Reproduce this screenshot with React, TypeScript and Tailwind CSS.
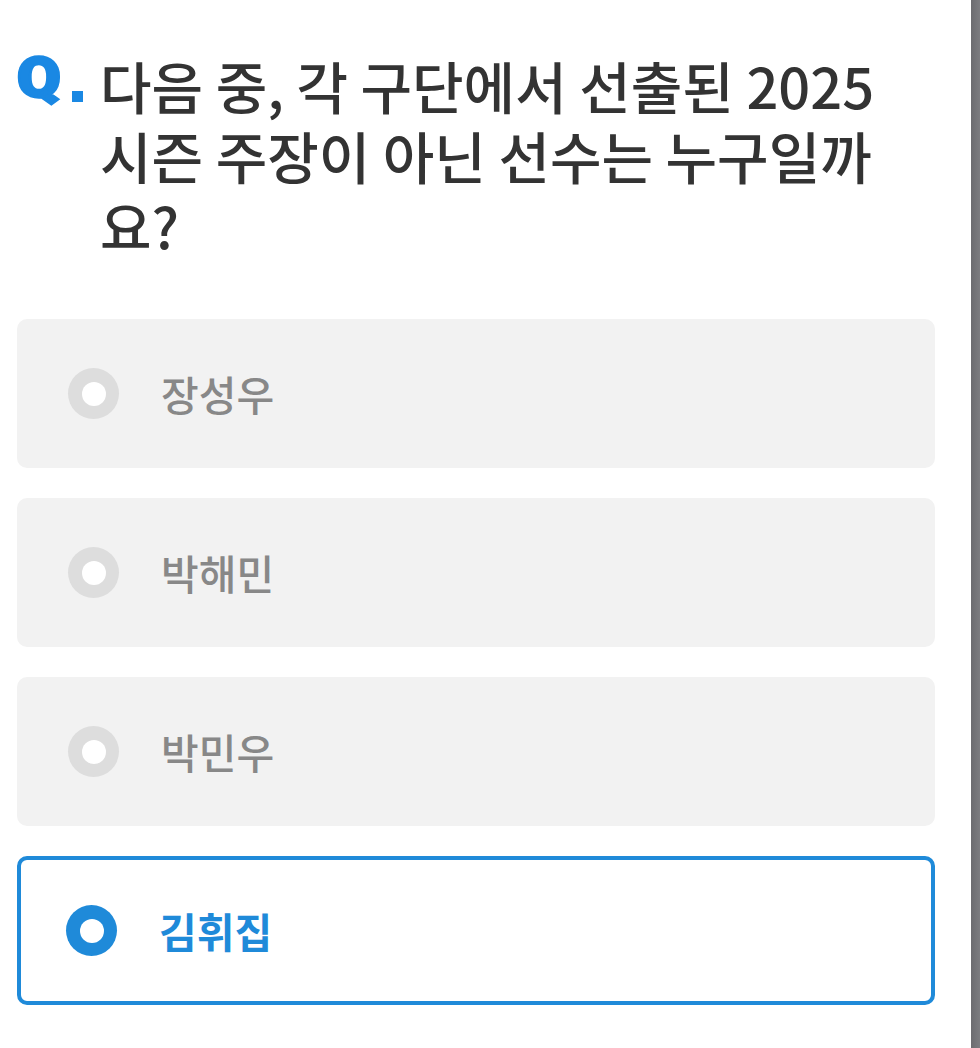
import React from 'react';

const options = ['장성우', '박해민', '박민우', '김휘집'];
const selected = 3;

function Radio({ active }: { active: boolean }) {
  return (
    <div
      className={
        'h-[51px] w-[51px] shrink-0 rounded-full flex items-center justify-center ' +
        (active ? 'bg-[#1f8ad9]' : 'bg-[#dddddd]')
      }
    >
      <div className="h-[24px] w-[24px] rounded-full bg-white" />
    </div>
  );
}

export default function App() {
  return (
    <div
      className="flex h-[1048px] w-[980px] bg-white"
      style={{ fontFamily: '"Noto Sans CJK KR", "Noto Sans", sans-serif' }}
    >
      <div className="flex-1 pl-[17px] pr-[36px] pt-[50px]">
        <div className="flex items-start">
          {/* Q. mark */}
          <div className="flex w-[83px] shrink-0 items-start">
            <div className="w-[55px] pt-[1px]">
              <span
                className="inline-block origin-left scale-x-[1.15] text-[55px] font-black leading-none text-[#1a88e3] [-webkit-text-stroke:2.5px_#1a88e3]"
                style={{ fontFamily: 'Roboto, sans-serif' }}
              >
                Q
              </span>
            </div>
            <span className="mt-[41px] h-[11px] w-[11px] bg-[#1a88e3]" />
          </div>
          <h1 className="w-[790px] text-[56px] font-medium leading-[70px] text-[#333333]">
            다음 중, 각 구단에서 선출된 2025 시즌 주장이 아닌 선수는 누구일까요?
          </h1>
        </div>

        <div className="mt-[59px] flex flex-col gap-[30px]">
          {options.map((name, i) => {
            const active = i === selected;
            return (
              <div
                key={name}
                className={
                  'flex h-[149px] items-center rounded-[10px] ' +
                  (active
                    ? 'border-[4px] border-[#1f8ad9] bg-white pl-[45px]'
                    : 'bg-[#f2f2f2] pl-[51px]')
                }
              >
                <Radio active={active} />
                <span
                  className={
                    'ml-[42px] text-[41px] leading-none ' +
                    (active ? 'font-bold text-[#1f8ad9]' : 'font-medium text-[#888888]')
                  }
                >
                  {name}
                </span>
              </div>
            );
          })}
        </div>
      </div>
      <div className="w-[9px] shrink-0 bg-gradient-to-r from-[#6c6c70] to-[#7c7c80]" />
    </div>
  );
}
